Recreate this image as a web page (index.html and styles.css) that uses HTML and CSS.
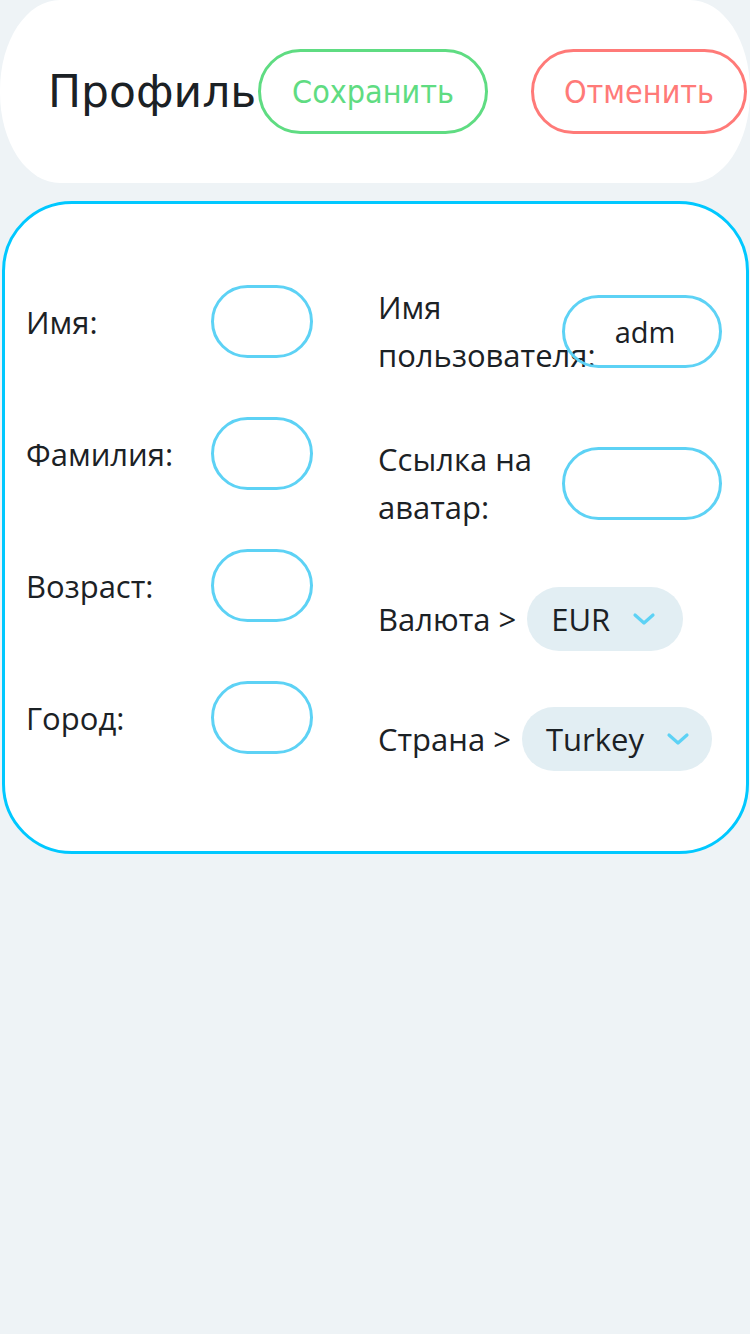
FILE: index.html
```html
<!DOCTYPE html>
<html lang="ru">
<head>
<meta charset="utf-8">
<title>Профиль</title>
<link rel="stylesheet" href="styles.css">
</head>
<body>
<header class="topbar">
  <h1 class="title">Профиль</h1>
  <button class="btn btn-save">Сохранить</button>
  <button class="btn btn-cancel">Отменить</button>
</header>
<main class="card">
  <div class="col">
    <div class="row"><span class="label">Имя:</span><span class="field field-sm"></span></div>
    <div class="row"><span class="label">Фамилия:</span><span class="field field-sm"></span></div>
    <div class="row"><span class="label">Возраст:</span><span class="field field-sm"></span></div>
    <div class="row"><span class="label">Город:</span><span class="field field-sm"></span></div>
  </div>
  <div class="col col-right">
    <div class="row"><span class="label label-wrap">Имя пользователя:</span><span class="field field-lg">adm</span></div>
    <div class="row"><span class="label label-wrap">Ссылка на аватар:</span><span class="field field-lg"></span></div>
    <div class="row row-select"><span class="label-inline">Валюта &gt;</span><span class="select select-eur">EUR<svg class="chev" viewBox="0 0 24 14" width="24" height="14"><path d="M3 3 L12 11 L21 3" fill="none" stroke="#5dd2f5" stroke-width="3.2" stroke-linecap="round" stroke-linejoin="round"/></svg></span></div>
    <div class="row row-select"><span class="label-inline">Страна &gt;</span><span class="select select-country">Turkey<svg class="chev" viewBox="0 0 24 14" width="24" height="14"><path d="M3 3 L12 11 L21 3" fill="none" stroke="#5dd2f5" stroke-width="3.2" stroke-linecap="round" stroke-linejoin="round"/></svg></span></div>
  </div>
</main>
</body>
</html>
```
FILE: styles.css
```css
html, body {
  margin: 0;
  padding: 0;
}
body {
  background: #eef3f6;
  width: 750px;
  height: 1334px;
  font-family: "Open Sans", "Noto Sans", sans-serif;
  color: #1b2125;
}
.topbar {
  background: #ffffff;
  height: 183px;
  border-radius: 60px / 90px;
  display: flex;
  align-items: center;
  padding-left: 48px;
  box-sizing: border-box;
}
.title {
  margin: 0;
  font-family: "DejaVu Sans", sans-serif;
  font-weight: normal;
  font-size: 44px;
  color: #1b2125;
  width: 210px;
  white-space: nowrap;
}
.btn {
  height: 85px;
  border-radius: 43px;
  background: #ffffff;
  border: 3px solid;
  font-family: "DejaVu Sans Condensed", "DejaVu Sans", sans-serif;
  font-stretch: condensed;
  font-size: 32px;
  padding: 0;
  box-sizing: border-box;
}
.btn-save {
  width: 230px;
  border-color: #5fdc82;
  color: #5fdc82;
}
.btn-cancel {
  width: 216px;
  margin-left: 43px;
  border-color: #ff7a78;
  color: #ff7a78;
}
.card {
  margin: 18px 1px 0 2px;
  height: 653px;
  box-sizing: border-box;
  background: #ffffff;
  border: 3px solid #00c8ff;
  border-radius: 70px;
  display: grid;
  grid-template-columns: 352px 1fr;
  padding: 81px 0 0 21px;
}
.col {
  display: flex;
  flex-direction: column;
  gap: 59px;
}
.col-right {
  gap: 56px;
  margin-top: -2px;
}
.row {
  display: flex;
  align-items: center;
}
.label {
  width: 185px;
  font-size: 31px;
  line-height: 48px;
  flex-shrink: 0;
}
.label-wrap {
  white-space: normal;
}
.field {
  display: flex;
  align-items: center;
  justify-content: center;
  height: 73px;
  box-sizing: border-box;
  border: 3px solid #5dd2f5;
  border-radius: 37px;
  font-size: 29px;
  background: transparent;
  overflow: hidden;
  flex-shrink: 0;
}
.field-sm { width: 102px; }
.field-lg {
  width: 160px;
  margin-left: -1px;
  padding-left: 6px;
}
.label-inline {
  font-size: 31px;
  line-height: 48px;
  white-space: nowrap;
  margin-right: 11px;
}
.select {
  display: flex;
  align-items: center;
  height: 64px;
  border-radius: 32px;
  background: #e2eef3;
  font-size: 31px;
  padding-left: 24px;
  box-sizing: border-box;
}
.select-eur { width: 156px; }
.select-country { width: 190px; }
.chev { margin-left: 22px; }
```
